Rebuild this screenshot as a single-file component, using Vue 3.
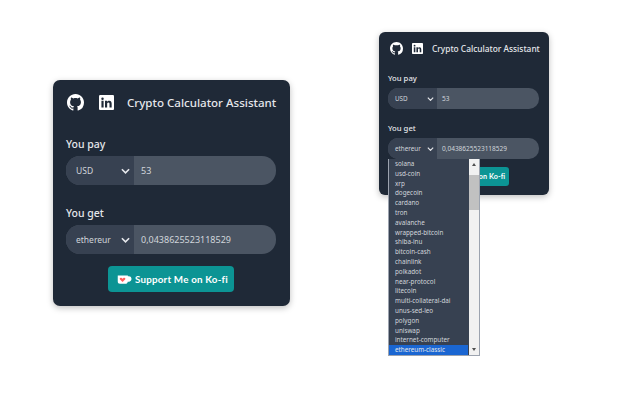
<script setup>
const coins = [
  'solana', 'usd-coin', 'xrp', 'dogecoin', 'cardano', 'tron', 'avalanche',
  'wrapped-bitcoin', 'shiba-inu', 'bitcoin-cash', 'chainlink', 'polkadot',
  'near-protocol', 'litecoin', 'multi-collateral-dai', 'unus-sed-leo',
  'polygon', 'uniswap', 'internet-computer', 'ethereum-classic'
]
const cards = [
  { id: 'large', open: false },
  { id: 'small', open: true }
]
</script>

<template>
  <div class="page">
    <section v-for="card in cards" :key="card.id" class="card" :class="card.id">
      <header class="head">
        <svg class="github" viewBox="0 0 16 16" fill="#fff">
          <path d="M8 0C3.58 0 0 3.58 0 8c0 3.54 2.29 6.53 5.47 7.59.4.07.55-.17.55-.38 0-.19-.01-.82-.01-1.49-2.01.37-2.53-.49-2.69-.94-.09-.23-.48-.94-.82-1.13-.28-.15-.68-.52-.01-.53.63-.01 1.08.58 1.23.82.72 1.21 1.87.87 2.33.66.07-.52.28-.87.51-1.07-1.78-.2-3.64-.89-3.64-3.95 0-.87.31-1.59.82-2.15-.08-.2-.36-1.02.08-2.12 0 0 .67-.21 2.2.82.64-.18 1.32-.27 2-.27s1.36.09 2 .27c1.53-1.04 2.2-.82 2.2-.82.44 1.1.16 1.92.08 2.12.51.56.82 1.27.82 2.15 0 3.07-1.87 3.75-3.65 3.95.29.25.54.73.54 1.48 0 1.07-.01 1.93-.01 2.2 0 .21.15.46.55.38A8.01 8.01 0 0 0 16 8c0-4.42-3.58-8-8-8z" />
        </svg>
        <svg class="linkedin" viewBox="0 0 16 16">
          <rect width="16" height="16" rx="1.2" fill="#fff" />
          <path fill="#1f2937" d="M2.6 6.2h2.3v7.2H2.6zM3.75 2.6a1.33 1.33 0 1 1 0 2.66 1.33 1.33 0 0 1 0-2.66zM6.4 6.2h2.2v1c.4-.7 1.2-1.2 2.3-1.2 2.2 0 2.6 1.4 2.6 3.4v4h-2.3V9.8c0-.9 0-1.8-1.2-1.8s-1.3.9-1.3 1.8v3.6H6.4z" />
        </svg>
        <h1 class="title">Crypto Calculator Assistant</h1>
      </header>

      <label class="label pay">You pay</label>
      <div class="group">
        <div class="select">
          <span>USD</span>
          <svg class="chevron" viewBox="0 0 10 6"><path d="M1 1l4 4 4-4" /></svg>
        </div>
        <div class="value">53</div>
      </div>

      <label class="label get">You get</label>
      <div class="group">
        <div class="select">
          <span>ethereur</span>
          <svg class="chevron" viewBox="0 0 10 6"><path d="M1 1l4 4 4-4" /></svg>
        </div>
        <div class="value">0,0438625523118529</div>
      </div>

      <a class="kofi">
        <svg class="cup" viewBox="0 0 20 14">
          <path fill="#fff" d="M1 1.5h13.5v1h1.2c2.6 0 3.6 1.7 3.6 3.6 0 2.2-1.3 3.8-3.6 3.8h-1.4c-.3 1.8-1.3 2.8-3 2.8H4c-2 0-3-1.2-3-3z" />
          <path fill="#ff5e5b" d="M7.4 10.2 4 6.9c-1-1.2.3-3 1.8-2.1l1.6 1.1 1.6-1.1c1.5-.9 2.8.9 1.8 2.1z" />
        </svg>
        <span>Support Me on Ko-fi</span>
      </a>

      <ul v-if="card.open" class="menu">
        <li v-for="(coin, i) in coins" :key="coin" :class="{ picked: i === coins.length - 1 }">{{ coin }}</li>
        <li class="scroll">
          <i class="up"></i>
          <b></b>
          <i class="down"></i>
        </li>
      </ul>
    </section>
  </div>
</template>

<style scoped>
.page {
  width: 640px;
  height: 400px;
  display: flex;
  align-items: flex-start;
  background: #fff;
  overflow: hidden;
  font-family: "Noto Sans", "Open Sans", sans-serif;
}

.card {
  position: relative;
  flex: none;
  box-sizing: border-box;
  display: flex;
  flex-direction: column;
  background: #1f2937;
  color: #e5e7eb;
  box-shadow: 0 2px 6px rgba(0, 0, 0, 0.25);
}

.head {
  display: flex;
  align-items: center;
}

.head svg {
  flex: none;
}

.title {
  margin: 0;
  font-weight: 500;
  white-space: nowrap;
  color: #e5e7eb;
}

.label {
  display: block;
  font-weight: 500;
}

.group {
  display: flex;
  overflow: hidden;
  background: #4b5563;
}

.select {
  flex: none;
  box-sizing: border-box;
  display: flex;
  align-items: center;
  justify-content: space-between;
  background: #374151;
  color: #d1d5db;
}

.value {
  display: flex;
  align-items: center;
  color: #d1d5db;
}

.chevron {
  flex: none;
  fill: none;
  stroke: #e5e7eb;
}

.kofi {
  display: flex;
  align-items: center;
  box-sizing: border-box;
  align-self: flex-start;
  background: #0c9494;
  color: #fff;
  font-family: Lato, "Noto Sans", sans-serif;
  font-weight: 700;
  white-space: nowrap;
}

.cup {
  flex: none;
}

/* big card */
.large {
  width: 237px;
  height: 226px;
  margin: 80px 0 0 53px;
  padding: 13px 14px 0 13px;
  border-radius: 7px;
}
.large .head { height: 18px; }
.large .github { width: 17px; height: 17px; margin-left: 1px; }
.large .linkedin { width: 15px; height: 15px; margin-left: 15px; }
.large .title { font-size: 11.55px; margin-left: 13px; }
.large .label { font-size: 10.5px; line-height: 16px; }
.large .pay { margin-top: 25px; }
.large .get { margin-top: 20px; }
.large .group { height: 29px; margin-top: 4px; border-radius: 14px; }
.large .select { width: 68px; padding: 0 4px 0 10px; font-size: 8.5px; }
.large .value { padding-left: 7px; font-size: 9px; }
.large .chevron { width: 9px; height: 6px; stroke-width: 1.8; }
.large .kofi {
  width: 126px;
  height: 26px;
  margin-top: 12px;
  margin-left: 42px;
  padding-left: 9px;
  border-radius: 4px;
  font-size: 9.8px;
  letter-spacing: 0.2px;
}
.large .cup { width: 15px; height: 11px; margin-right: 3px; }

/* small card */
.small {
  width: 170px;
  height: 163px;
  margin: 32px 0 0 89px;
  padding: 10px 10px 0 9px;
  border-radius: 6px;
}
.small .head { height: 13px; }
.small .github { width: 13px; height: 13px; margin-left: 2px; }
.small .linkedin { width: 11px; height: 11px; margin-left: 9px; }
.small .title { font-size: 8.35px; margin-left: 9px; }
.small .label { font-size: 7.7px; line-height: 12px; }
.small .pay { margin-top: 17px; }
.small .get { margin-top: 13px; }
.small .group { height: 21px; margin-top: 4px; border-radius: 10px; }
.small .select { width: 49px; padding: 0 3px 0 7px; font-size: 6.3px; }
.small .value { padding-left: 5px; font-size: 6.5px; }
.small .chevron { width: 7px; height: 4px; stroke-width: 1.8; }
.small .kofi {
  width: 91px;
  height: 19px;
  margin-top: 8px;
  margin-left: 30px;
  padding-left: 6px;
  border-radius: 3px;
  font-size: 7.2px;
  letter-spacing: 0.1px;
}
.small .cup { width: 11px; height: 8px; margin-right: 3px; }

/* open select list */
.menu {
  position: absolute;
  left: 9px;
  top: 127px;
  box-sizing: border-box;
  width: 92px;
  height: 197px;
  margin: 0;
  padding: 0 11px 0 0;
  list-style: none;
  background: #374151;
  border: 1px solid #9ca3af;
  border-top: 0;
  font-size: 6.3px;
  color: #d1d5db;
}
.menu li {
  height: 9.8px;
  line-height: 9.8px;
  padding-left: 6px;
}
.menu li.picked {
  background: #1a66d2;
  color: #e5e7eb;
}
.menu li.scroll {
  position: absolute;
  top: 0;
  right: 0;
  width: 10px;
  height: 100%;
  padding: 0;
  display: flex;
  flex-direction: column;
  align-items: center;
  background: #f1f1f1;
}
.scroll b {
  width: 100%;
  height: 35px;
  margin-top: 9px;
  background: #c1c1c1;
}
.scroll i {
  width: 0;
  height: 0;
  border-left: 2.5px solid transparent;
  border-right: 2.5px solid transparent;
}
.scroll .up {
  margin-top: 4px;
  border-bottom: 3px solid #505050;
}
.scroll .down {
  margin-top: auto;
  margin-bottom: 4px;
  border-top: 3px solid #505050;
}
</style>

<style>
html, body {
  margin: 0;
  background: #fff;
}
</style>
